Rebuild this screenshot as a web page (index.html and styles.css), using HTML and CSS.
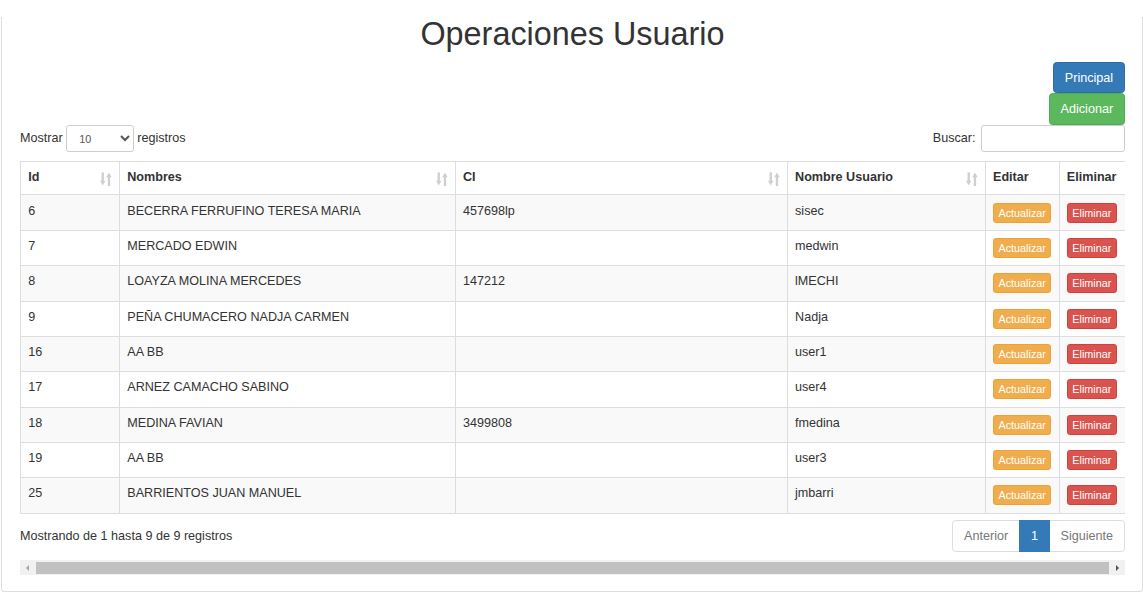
FILE: index.html
```
<!DOCTYPE html>
<html lang="es">
<head>
<meta charset="utf-8">
<title>Operaciones Usuario</title>
<link rel="stylesheet" href="styles.css">
</head>
<body>
<div class="page">
  <div class="panel">
    <h1 class="title">Operaciones Usuario</h1>
    <div class="actions">
      <button class="btn btn-primary">Principal</button>
      <button class="btn btn-success">Adicionar</button>
    </div>
    <div class="dt-wrapper">
      <div class="controls">
        <label class="length">Mostrar <select class="input-sm select"><option>10</option><option>25</option><option>50</option><option>100</option></select> registros</label>
        <label class="filter">Buscar:<input class="input-sm search" type="search"></label>
      </div>
      <div class="table-clip">
        <table class="table">
          <colgroup>
            <col class="c-id"><col class="c-nom"><col class="c-ci"><col class="c-user"><col class="c-edit"><col class="c-del">
          </colgroup>
          <thead>
            <tr>
              <th class="sortable">Id<svg class="sort" viewBox="0 0 12 14"><rect x="1.6" y="0" width="2.4" height="9"/><polygon points="0,8.6 5.6,8.6 2.8,13.6"/><polygon points="6.4,5 12,5 9.2,0"/><rect x="8" y="4.6" width="2.4" height="9.4"/></svg></th>
              <th class="sortable">Nombres<svg class="sort" viewBox="0 0 12 14"><rect x="1.6" y="0" width="2.4" height="9"/><polygon points="0,8.6 5.6,8.6 2.8,13.6"/><polygon points="6.4,5 12,5 9.2,0"/><rect x="8" y="4.6" width="2.4" height="9.4"/></svg></th>
              <th class="sortable">CI<svg class="sort" viewBox="0 0 12 14"><rect x="1.6" y="0" width="2.4" height="9"/><polygon points="0,8.6 5.6,8.6 2.8,13.6"/><polygon points="6.4,5 12,5 9.2,0"/><rect x="8" y="4.6" width="2.4" height="9.4"/></svg></th>
              <th class="sortable">Nombre Usuario<svg class="sort" viewBox="0 0 12 14"><rect x="1.6" y="0" width="2.4" height="9"/><polygon points="0,8.6 5.6,8.6 2.8,13.6"/><polygon points="6.4,5 12,5 9.2,0"/><rect x="8" y="4.6" width="2.4" height="9.4"/></svg></th>
              <th>Editar</th>
              <th>Eliminar</th>
            </tr>
          </thead>
          <tbody>
            <tr><td>6</td><td>BECERRA FERRUFINO TERESA MARIA</td><td>457698lp</td><td>sisec</td><td><button class="btn-xs btn-warning">Actualizar</button></td><td><button class="btn-xs btn-danger">Eliminar</button></td></tr>
            <tr><td>7</td><td>MERCADO EDWIN</td><td></td><td>medwin</td><td><button class="btn-xs btn-warning">Actualizar</button></td><td><button class="btn-xs btn-danger">Eliminar</button></td></tr>
            <tr><td>8</td><td>LOAYZA MOLINA MERCEDES</td><td>147212</td><td>lMECHI</td><td><button class="btn-xs btn-warning">Actualizar</button></td><td><button class="btn-xs btn-danger">Eliminar</button></td></tr>
            <tr><td>9</td><td>PEÑA CHUMACERO NADJA CARMEN</td><td></td><td>Nadja</td><td><button class="btn-xs btn-warning">Actualizar</button></td><td><button class="btn-xs btn-danger">Eliminar</button></td></tr>
            <tr><td>16</td><td>AA BB</td><td></td><td>user1</td><td><button class="btn-xs btn-warning">Actualizar</button></td><td><button class="btn-xs btn-danger">Eliminar</button></td></tr>
            <tr><td>17</td><td>ARNEZ CAMACHO SABINO</td><td></td><td>user4</td><td><button class="btn-xs btn-warning">Actualizar</button></td><td><button class="btn-xs btn-danger">Eliminar</button></td></tr>
            <tr><td>18</td><td>MEDINA FAVIAN</td><td>3499808</td><td>fmedina</td><td><button class="btn-xs btn-warning">Actualizar</button></td><td><button class="btn-xs btn-danger">Eliminar</button></td></tr>
            <tr><td>19</td><td>AA BB</td><td></td><td>user3</td><td><button class="btn-xs btn-warning">Actualizar</button></td><td><button class="btn-xs btn-danger">Eliminar</button></td></tr>
            <tr><td>25</td><td>BARRIENTOS JUAN MANUEL</td><td></td><td>jmbarri</td><td><button class="btn-xs btn-warning">Actualizar</button></td><td><button class="btn-xs btn-danger">Eliminar</button></td></tr>
          </tbody>
        </table>
      </div>
      <div class="footer">
        <div class="info">Mostrando de 1 hasta 9 de 9 registros</div>
        <ul class="pagination">
          <li class="disabled"><a>Anterior</a></li>
          <li class="active"><a>1</a></li>
          <li class="disabled"><a>Siguiente</a></li>
        </ul>
      </div>
    </div>
    <div class="hscroll">
      <div class="arrow"><span class="tri-left"></span></div>
      <div class="thumb"></div>
      <div class="arrow"><span class="tri-right"></span></div>
    </div>
  </div>
</div>
</body>
</html>
```
FILE: styles.css
```
html, body {
  margin: 0;
  padding: 0;
  background: #fff;
}
.page {
  zoom: 0.9;
  font-family: "Liberation Sans", Arial, Helvetica, sans-serif;
  font-size: 14px;
  line-height: 1.42857;
  color: #333;
}
.panel {
  margin: 0 0.5px 0 1.5px;
  border: 1px solid #ddd;
  border-top: 0;
  border-radius: 0 0 4px 4px;
  padding: 0 18.5px 17px 19.7px;
}
.title {
  margin: 19px 0 10px;
  font-size: 36px;
  font-weight: 500;
  line-height: 1.1;
  text-align: center;
  color: #333;
}
.actions {
  display: flex;
  flex-direction: column;
  align-items: flex-end;
}
.btn {
  display: inline-block;
  font-family: inherit;
  font-size: 14px;
  line-height: 20px;
  padding: 6.5px 12px;
  border: 1px solid transparent;
  border-radius: 4px;
  color: #fff;
  cursor: pointer;
}
.btn-primary { background: #337ab7; border-color: #2e6da4; }
.btn-success { background: #5cb85c; border-color: #4cae4c; }
.controls {
  display: flex;
  justify-content: space-between;
  align-items: center;
  margin-bottom: 10px;
}
.length, .filter {
  font-weight: normal;
  white-space: nowrap;
}
.input-sm {
  height: 30px;
  padding: 5px 10px;
  font-family: inherit;
  font-size: 12px;
  line-height: 1.5;
  border: 1px solid #ccc;
  border-radius: 3px;
  color: #555;
  background: #fff;
  box-sizing: border-box;
  vertical-align: middle;
}
.select { width: 75px; }
.search { width: 160px; margin-left: 0.5em; }
.table-clip {
  overflow: hidden;
  margin-bottom: 7.5px;
}
.table {
  border-collapse: collapse;
  border-spacing: 0;
  table-layout: fixed;
  width: 1230px;
}
.c-id { width: 110px; }
.c-nom { width: 373px; }
.c-ci { width: 369px; }
.c-user { width: 220px; }
.c-edit { width: 82px; }
.c-del { width: 76px; }
.table th, .table td {
  border: 1px solid #ddd;
  padding: 8px;
  text-align: left;
  vertical-align: top;
  white-space: nowrap;
  overflow: hidden;
}
.table th {
  font-weight: bold;
  border-bottom: 2px solid #ddd;
  vertical-align: bottom;
  position: relative;
}
.table th.sortable { padding-right: 30px; }
.sort {
  position: absolute;
  right: 8px;
  bottom: 9px;
  width: 13px;
  height: 16px;
  fill: #cfcfcf;
}
.table tbody tr:nth-child(odd) td { background: #f9f9f9; }
.btn-xs {
  display: inline-block;
  vertical-align: middle;
  font-family: inherit;
  font-size: 12px;
  line-height: 1.5;
  padding: 1px 5px;
  border: 1px solid transparent;
  border-radius: 3px;
  color: #fff;
  cursor: pointer;
}
.btn-warning { background: #f0ad4e; border-color: #eea236; }
.btn-danger { background: #d9534f; border-color: #d43f3a; }
.footer {
  display: flex;
  justify-content: space-between;
  align-items: flex-start;
}
.info {
  padding-top: 8px;
  white-space: nowrap;
}
.pagination {
  display: flex;
  list-style: none;
  margin: 0;
  padding: 0;
}
.pagination li a {
  display: block;
  padding: 6.5px 12px;
  line-height: 20px;
  border: 1px solid #ddd;
  margin-left: -1px;
  color: #337ab7;
  background: #fff;
}
.pagination li:first-child a {
  margin-left: 0;
  border-radius: 4px 0 0 4px;
}
.pagination li:last-child a { border-radius: 0 4px 4px 0; }
.pagination li.disabled a { color: #777; }
.pagination li.active a {
  background: #337ab7;
  border-color: #337ab7;
  color: #fff;
  position: relative;
  z-index: 1;
}
.hscroll {
  display: flex;
  align-items: stretch;
  height: 17px;
  margin-top: 9px;
  background: #f1f1f1;
}
.arrow {
  width: 17px;
  display: flex;
  align-items: center;
  justify-content: center;
}
.tri-left {
  width: 0;
  height: 0;
  border-top: 4px solid transparent;
  border-bottom: 4px solid transparent;
  border-right: 4px solid #a3a3a3;
}
.tri-right {
  width: 0;
  height: 0;
  border-top: 4px solid transparent;
  border-bottom: 4px solid transparent;
  border-left: 4px solid #505050;
}
.thumb {
  flex: 1;
  margin: 2px 1px;
  background: #c1c1c1;
}
```
